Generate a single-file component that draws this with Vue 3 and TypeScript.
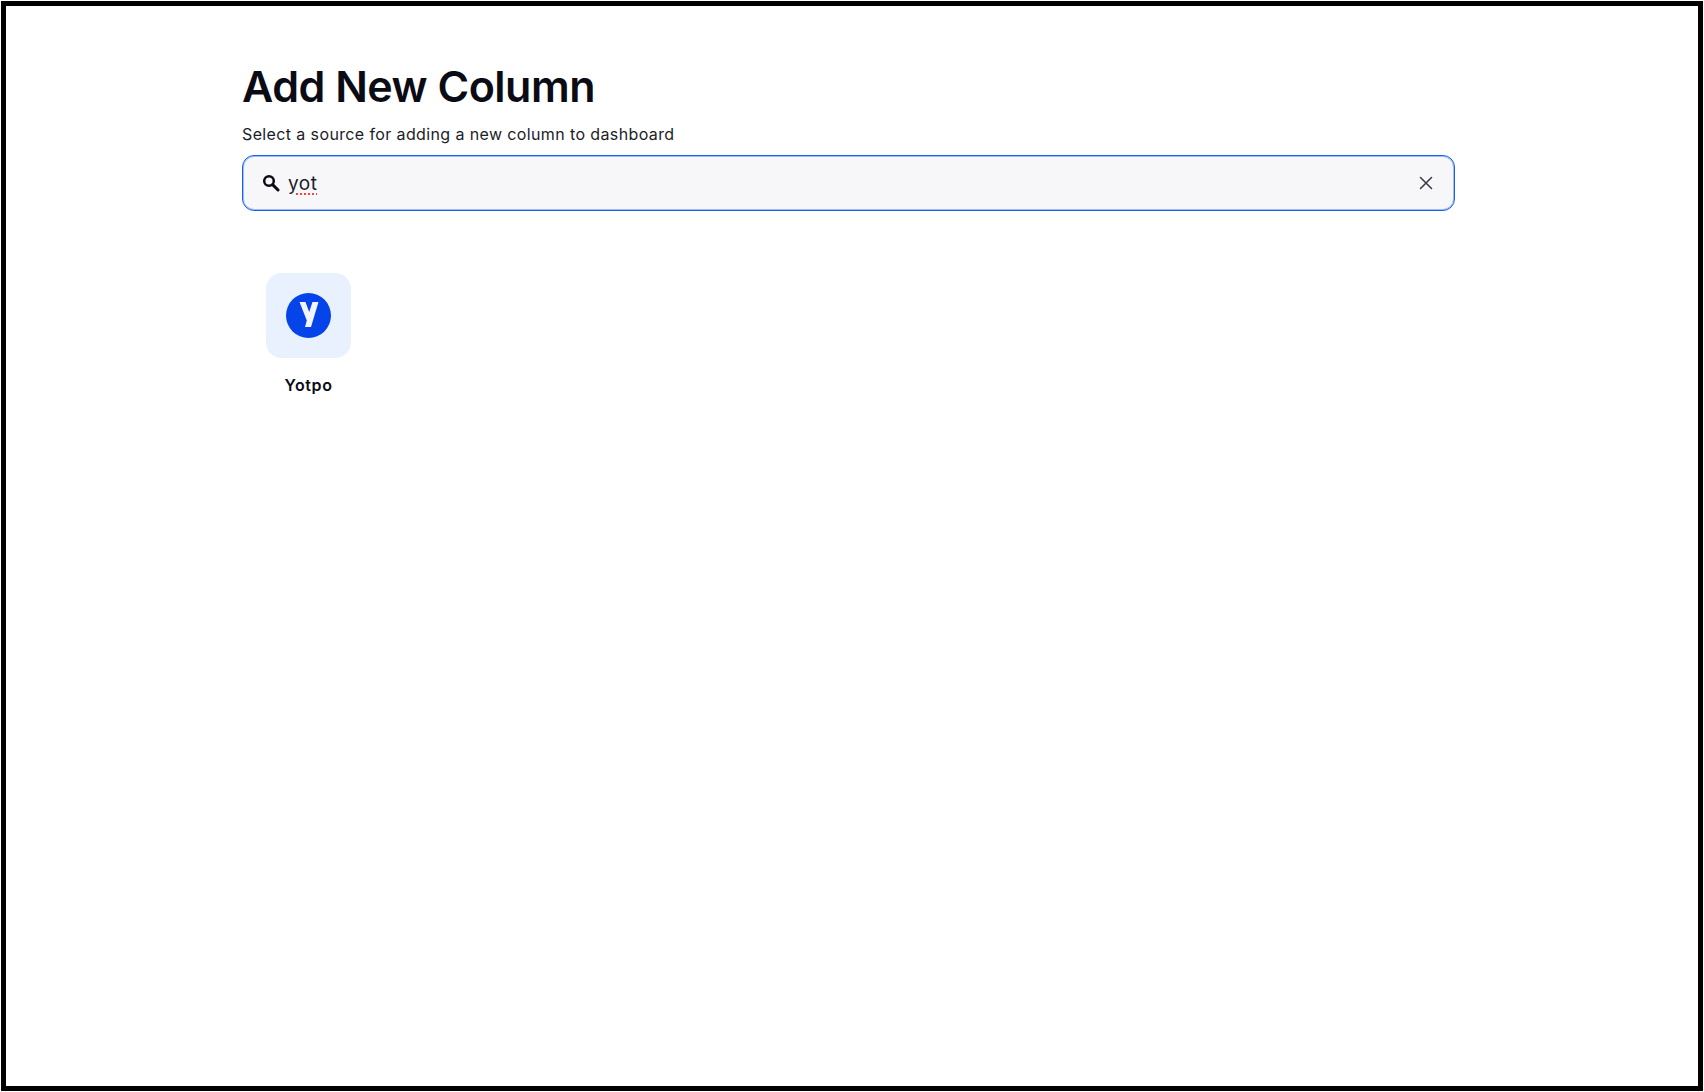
<script setup lang="ts">
const query: string = 'yot'
</script>

<template>
  <div class="frame">
    <main class="content">
      <h1 class="title">Add New Column</h1>
      <p class="subtitle">Select a source for adding a new column to dashboard</p>
      <div class="search">
        <svg class="search-icon" viewBox="0 0 18 18" width="18" height="18" fill="none">
          <circle cx="7" cy="7" r="4.8" stroke="#0b0b16" stroke-width="2.5" />
          <path d="M10.6 10.6 L16 16" stroke="#0b0b16" stroke-width="3" stroke-linecap="round" />
        </svg>
        <span class="query">{{ query }}</span>
        <svg class="clear-icon" viewBox="0 0 14 14" width="14" height="14" fill="none">
          <path d="M1.5 1.5 L12.5 12.5 M12.5 1.5 L1.5 12.5" stroke="#3d3d4a" stroke-width="1.6" stroke-linecap="round" />
        </svg>
      </div>
      <div class="sources">
        <div class="source">
          <div class="tile">
            <svg viewBox="0 0 45 45" width="45" height="45">
              <circle cx="22.5" cy="22.5" r="22.5" fill="#0544e8" />
              <path d="M13.5 9 H19.5 L23.2 19 L26.5 9 H32.5 L25 34 H19 L20.8 27.5 Z" fill="#f2f5ff" />
            </svg>
          </div>
          <div class="source-name">Yotpo</div>
        </div>
      </div>
    </main>
  </div>
</template>

<style>
html, body {
  margin: 0;
  background: #fff;
}
</style>

<style scoped>
.frame {
  box-sizing: border-box;
  width: 1702px;
  height: 1090px;
  margin: 1px;
  border: 5px solid #000;
  background: #fff;
  font-family: Inter, "Liberation Sans", sans-serif;
  color: #0b0b16;
  padding: 53px 0 0 236px;
}
.content {
  width: 1213px;
}
.title {
  margin: 0;
  font-size: 43px;
  line-height: 54px;
  font-weight: 600;
  letter-spacing: -0.5px;
}
.subtitle {
  margin: 11px 0 0;
  font-size: 16px;
  line-height: 20px;
  font-weight: 400;
  letter-spacing: 0.38px;
  color: #1c1c28;
}
.search {
  box-sizing: border-box;
  display: flex;
  align-items: center;
  height: 56px;
  margin-top: 11px;
  padding: 0 21px 0 19px;
  border: 1px solid #1a5fe8;
  border-radius: 12px;
  background: #f7f7fa;
  box-shadow: inset 0 0 0 1px rgba(32, 101, 236, 0.4);
}
.search-icon {
  flex: none;
}
.query {
  margin-left: 8px;
  padding-top: 2px;
  font-size: 19px;
  line-height: 24px;
  letter-spacing: 0.5px;
  color: #1c1c28;
  text-decoration: underline dotted #ee4444;
  text-decoration-thickness: 1.5px;
  text-underline-offset: 3px;
}
.clear-icon {
  flex: none;
  margin-left: auto;
}
.sources {
  display: flex;
  margin-top: 62px;
  padding-left: 24px;
}
.source {
  display: flex;
  flex-direction: column;
  align-items: center;
  width: 85px;
}
.tile {
  display: flex;
  align-items: center;
  justify-content: center;
  width: 85px;
  height: 85px;
  border-radius: 16px;
  background: #e9f1fe;
}
.source-name {
  margin-top: 16px;
  font-size: 16px;
  line-height: 22px;
  font-weight: 600;
  letter-spacing: 0.6px;
  white-space: nowrap;
}
</style>
